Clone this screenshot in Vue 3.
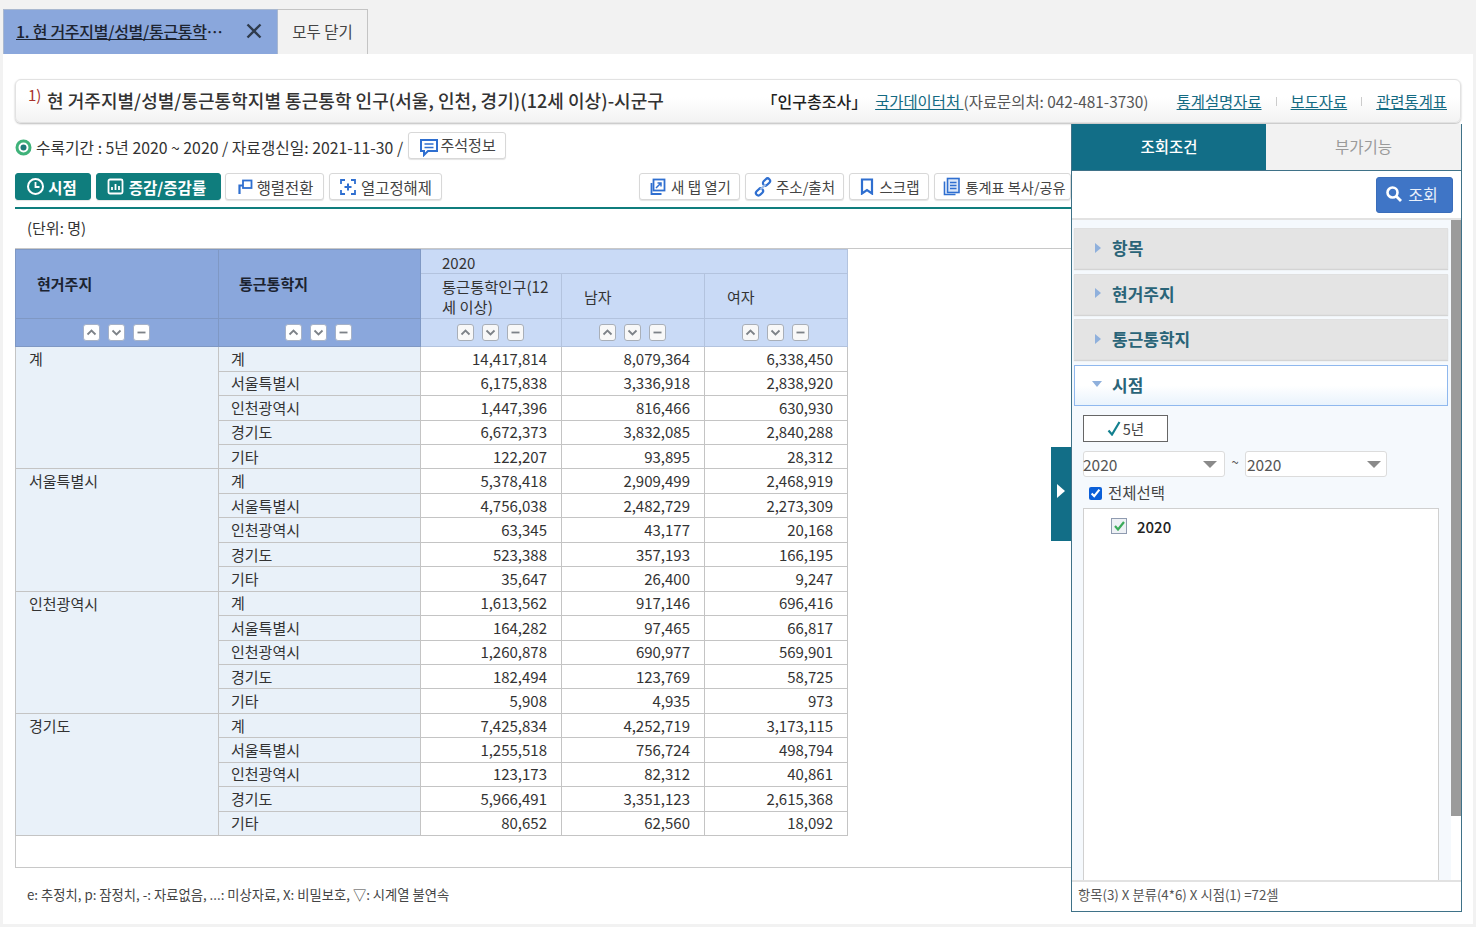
<script setup>
const subs = ['계', '서울특별시', '인천광역시', '경기도', '기타']
const groups = [
  { name: '계', rows: [
    ['14,417,814', '8,079,364', '6,338,450'], ['6,175,838', '3,336,918', '2,838,920'],
    ['1,447,396', '816,466', '630,930'], ['6,672,373', '3,832,085', '2,840,288'], ['122,207', '93,895', '28,312']] },
  { name: '서울특별시', rows: [
    ['5,378,418', '2,909,499', '2,468,919'], ['4,756,038', '2,482,729', '2,273,309'],
    ['63,345', '43,177', '20,168'], ['523,388', '357,193', '166,195'], ['35,647', '26,400', '9,247']] },
  { name: '인천광역시', rows: [
    ['1,613,562', '917,146', '696,416'], ['164,282', '97,465', '66,817'],
    ['1,260,878', '690,977', '569,901'], ['182,494', '123,769', '58,725'], ['5,908', '4,935', '973']] },
  { name: '경기도', rows: [
    ['7,425,834', '4,252,719', '3,173,115'], ['1,255,518', '756,724', '498,794'],
    ['123,173', '82,312', '40,861'], ['5,966,491', '3,351,123', '2,615,368'], ['80,652', '62,560', '18,092']] }
]
const sorters = [0, 1, 2, 3, 4]
const accordion = ['항목', '현거주지', '통근통학지']
</script>

<template>
  <div class="page">
    <nav class="tabs">
      <div class="tab-active">
        <span class="tab-title">1. 현 거주지별/성별/통근통학</span><span class="tab-ell">⋯</span>
        <svg class="tab-x" width="16" height="16" viewBox="0 0 16 16"><path d="M1.500 1.500 14.500 14.500M14.500 1.500 1.500 14.500" stroke="#2f3b4c" stroke-width="2.400" fill="none"/></svg>
      </div>
      <div class="tab-close">모두 닫기</div>
    </nav>

    <main class="main">
      <header class="title-box">
        <h1 class="title"><sup>1)</sup><span class="title-text">현 거주지별/성별/통근통학지별 통근통학 인구(서울, 인천, 경기)(12세 이상)-시군구</span></h1>
        <div class="title-links">
          <b>「인구총조사」</b>
          <span class="org"><a>국가데이터처 </a>(자료문의처: 042-481-3730)</span>
          <a class="l1">통계설명자료</a><i class="tick"></i><a>보도자료</a><i class="tick"></i><a>관련통계표</a>
        </div>
      </header>

      <div class="info">
        <svg width="17" height="17" viewBox="0 0 17 17"><circle cx="8.500" cy="8.500" r="6.500" fill="#fff" stroke="#3fb27a" stroke-width="3"/><circle cx="8.500" cy="8.500" r="3" fill="#1f7a78"/></svg>
        <span class="info-text">수록기간 : 5년 2020 ~ 2020 / 자료갱신일: 2021-11-30 /</span>
        <button class="btn note">
          <svg width="20" height="20" viewBox="0 0 20 20"><path d="M2 3h16v11H9l-4 4v-4H2z" fill="none" stroke="#2f6fd0" stroke-width="2"/><path d="M5.500 7h9M5.500 10.500h9" stroke="#2f6fd0" stroke-width="1.600"/></svg>주석정보
        </button>
      </div>

      <div class="toolbar">
        <button class="btn teal t1">
          <svg width="19" height="19" viewBox="0 0 19 19"><circle cx="9.500" cy="9.500" r="7.500" fill="none" stroke="#fff" stroke-width="2"/><path d="M9.500 5v5h4" fill="none" stroke="#fff" stroke-width="1.800"/></svg>시점
        </button>
        <button class="btn teal t2">
          <svg width="17" height="17" viewBox="0 0 17 17"><rect x="1.500" y="1.500" width="14" height="14" rx="1.500" fill="none" stroke="#fff" stroke-width="1.800"/><path d="M5 12V9M8.500 12V6M12 12V8" stroke="#fff" stroke-width="1.800"/></svg>증감/증감률
        </button>
        <button class="btn t3">
          <svg width="18" height="18" viewBox="0 0 18 18"><rect x="7" y="2.500" width="8.500" height="7.500" fill="none" stroke="#2f6fd0" stroke-width="1.800"/><path d="M3.500 16V7.500H7" fill="none" stroke="#2f6fd0" stroke-width="2.200"/></svg>행렬전환
        </button>
        <button class="btn t4">
          <svg width="18" height="18" viewBox="0 0 18 18"><path d="M6 2H2v4M12 2h4v4M6 16H2v-4M12 16h4v-4" fill="none" stroke="#2f6fd0" stroke-width="1.800"/><path d="M9 5.500v7M5.500 9h7" stroke="#2f6fd0" stroke-width="2"/></svg>열고정해제
        </button>
        <span class="spacer"></span>
        <button class="btn t5">
          <svg width="18" height="18" viewBox="0 0 18 18"><rect x="5.500" y="1.500" width="11" height="11" fill="none" stroke="#2f6fd0" stroke-width="1.800"/><path d="M3.500 5v11h10" fill="none" stroke="#2f6fd0" stroke-width="1.800"/><path d="M8 10l5-5M9.500 5H13v3.500" fill="none" stroke="#2f6fd0" stroke-width="1.500"/></svg>새 탭 열기
        </button>
        <button class="btn t6">
          <svg width="20" height="20" viewBox="0 0 20 20"><g fill="none" stroke="#2f6fd0" stroke-width="2.200"><rect x="9.500" y="2.500" width="8" height="5" rx="2.500" transform="rotate(-45 13.500 5)"/><rect x="2.500" y="12.500" width="8" height="5" rx="2.500" transform="rotate(-45 6.500 15)"/></g><path d="M7.500 12.500l5-5" stroke="#9cbbe8" stroke-width="2"/></svg>주소/출처
        </button>
        <button class="btn t7">
          <svg width="14" height="17" viewBox="0 0 14 17"><path d="M2 1.500h10v14l-5-3.500-5 3.500z" fill="none" stroke="#2f6fd0" stroke-width="2.200"/></svg>스크랩
        </button>
        <button class="btn t8">
          <svg width="19" height="19" viewBox="0 0 19 19"><rect x="5.500" y="1.500" width="11.500" height="14" fill="#dbe7f8" stroke="#2f6fd0" stroke-width="1.600"/><path d="M8 5.500h6.500M8 8.500h6.500M8 11.500h6.500" stroke="#2f6fd0" stroke-width="1.300"/><path d="M2.500 4.500v13h11" fill="none" stroke="#2f6fd0" stroke-width="1.600"/></svg>통계표 복사/공유
        </button>
      </div>

      <p class="unit">(단위: 명)</p>

      <section class="table-box">
        <table class="grid">
          <colgroup><col class="c0"><col class="c1"><col class="c2"><col class="c3"><col class="c3"></colgroup>
          <thead>
            <tr class="h1">
              <th class="dark first" rowspan="2">현거주지</th>
              <th class="dark" rowspan="2">통근통학지</th>
              <th class="light yr" colspan="3">2020</th>
            </tr>
            <tr class="h2">
              <th class="light wrap">통근통학인구(12<br>세 이상)</th>
              <th class="light lab">남자</th>
              <th class="light lab">여자</th>
            </tr>
            <tr class="h3">
              <td v-for="n in sorters" :key="n" :class="n < 2 ? 'dark' : 'light'">
                <div class="sorts">
                  <span class="sort"><svg width="11" height="7" viewBox="0 0 11 7"><path d="M1.500 5.500 5.500 1.500 9.500 5.500" fill="none" stroke="#7d8288" stroke-width="1.800"/></svg></span>
                  <span class="sort"><svg width="11" height="7" viewBox="0 0 11 7"><path d="M1.500 1.500 5.500 5.500 9.500 1.500" fill="none" stroke="#7d8288" stroke-width="1.800"/></svg></span>
                  <span class="sort"><svg width="11" height="7" viewBox="0 0 11 7"><path d="M1.500 3.500h8" fill="none" stroke="#7d8288" stroke-width="1.800"/></svg></span>
                </div>
              </td>
            </tr>
          </thead>
          <tbody>
            <template v-for="g in groups" :key="g.name">
              <tr v-for="(r, i) in g.rows" :key="i">
                <th v-if="i === 0" class="rh group" rowspan="5">{{ g.name }}</th>
                <th class="rh">{{ subs[i] }}</th>
                <td v-for="(v, j) in r" :key="j" class="num">{{ v }}</td>
              </tr>
            </template>
          </tbody>
        </table>
      </section>

      <p class="legend">e: 추정치, p: 잠정치, -: 자료없음, ...: 미상자료, X: 비밀보호, ▽: 시계열 불연속</p>

      <aside class="panel">
        <button class="handle" aria-label="패널 접기"><svg width="10" height="14" viewBox="0 0 10 14"><path d="M1 0l8 7-8 7z" fill="#fff"/></svg></button>
        <div class="p-tabs">
          <div class="p-tab on">조회조건</div>
          <div class="p-tab">부가기능</div>
        </div>
        <div class="p-search">
          <button class="search">
            <svg width="18" height="18" viewBox="0 0 18 18"><circle cx="7.500" cy="7.500" r="5" fill="none" stroke="#fff" stroke-width="2.600"/><path d="M11 11l5 5" stroke="#fff" stroke-width="2.800"/></svg>조회
          </button>
        </div>
        <div class="p-body">
          <div class="p-scroll">
            <div class="p-content">
              <div v-for="a in accordion" :key="a" class="acc">
                <svg width="6" height="10" viewBox="0 0 6 10"><path d="M0 0l6 5-6 5z" fill="#8fb0dc"/></svg><span>{{ a }}</span>
              </div>
              <div class="acc open">
                <svg class="down" width="10" height="6" viewBox="0 0 10 6"><path d="M0 0h10L5 6z" fill="#8fb0dc"/></svg><span>시점</span>
              </div>
              <div class="open-body">
                <button class="period">
                  <svg width="14" height="15" viewBox="0 0 14 15"><path d="M1.500 9.500 5 13.500 12.500 1" fill="none" stroke="#13808f" stroke-width="2.200"/></svg>5년
                </button>
                <div class="range">
                  <div class="sel">2020<i class="caret"></i></div>
                  <span class="tilde">~</span>
                  <div class="sel second">2020<i class="caret"></i></div>
                </div>
                <label class="all"><input type="checkbox" checked>전체선택</label>
                <div class="list">
                  <div class="item">
                    <span class="cb"><svg width="11" height="10" viewBox="0 0 11 10"><path d="M1 5l3 3.500L10 1" fill="none" stroke="#3cab5a" stroke-width="2.200"/></svg></span>
                    2020
                  </div>
                </div>
              </div>
            </div>
            <div class="bar"><div class="thumb"></div></div>
          </div>
        </div>
        <div class="p-foot">항목(3) X 분류(4*6) X 시점(1) =72셀</div>
      </aside>
    </main>
  </div>
</template>

<style>
html, body { background: #f2f2f2; }
</style>

<style scoped>
* { box-sizing: border-box; }
.page {
  width: 1476px;
  height: 927px;
  overflow: hidden;
  font-family: "Noto Sans CJK KR", "Noto Sans", sans-serif;
  font-size: 15px;
  color: #333;
  background: #f2f2f2;
}
button { font-family: inherit; padding: 0; cursor: pointer; }
a { text-decoration: underline; }

.tabs { display: flex; height: 54px; padding: 9px 0 0 3px; }
.tab-active {
  width: 275px;
  background: #8aa7dc;
  border: 1px solid #a9b8d0;
  border-bottom: 0;
  display: flex;
  align-items: center;
  padding: 0 0 2px 12px;
  color: #1d2431;
  font-weight: 500;
  font-size: 16px;
}
.tab-title { text-decoration: underline; letter-spacing: -0.28px; }
.tab-ell { letter-spacing: -1px; }
.tab-x { margin-left: 24px; }
.tab-close {
  width: 90px;
  border: 1px solid #c4c4c4;
  border-bottom: 0;
  border-left: 0;
  display: flex;
  align-items: center;
  justify-content: center;
  padding-bottom: 2px;
  font-size: 15.500px;
  color: #444;
}

.main {
  position: relative;
  margin-left: 3px;
  width: 1470px;
  height: 870px;
  background: #fff;
  padding: 25px 0 0 12px;
}
.title-box {
  width: 1446px;
  height: 44px;
  border: 1px solid #e2e2e2;
  border-radius: 6px;
  background: linear-gradient(#fff 40%, #f3f3f3);
  box-shadow: 0 1px 2px #bbb;
  display: flex;
  align-items: center;
  justify-content: space-between;
  padding: 0 13px 0 12px;
}
.title { display: flex; align-items: center; margin: -3px 0 0; font-size: 18px; font-weight: 500; color: #333; white-space: nowrap; letter-spacing: 0.04px; }
.title sup { color: #a8322c; font-size: 15px; font-weight: 400; line-height: 1; margin: -11px 6px 0 0; width: 13px; }
.title-links { display: flex; align-items: center; font-size: 15.400px; color: #555; white-space: nowrap; }
.title-links b { font-weight: 500; color: #222; font-size: 16px; }
.title-links a { color: #146a82; }
.org { margin: 0 28px 0 8px; }
.tick { width: 1px; height: 9px; background: #ccc; margin: 0 14px; }

.info { display: flex; align-items: center; height: 28px; margin-top: 8px; }
.info svg:first-child { margin-top: 5px; }
.info-text { margin: 5px 0 0 4px; font-size: 15.800px; color: #333; white-space: nowrap; }
.btn {
  display: inline-flex;
  align-items: center;
  justify-content: center;
  height: 27px;
  border: 1px solid #d8d8d8;
  border-radius: 3px;
  background: #fff;
  color: #444;
  font-size: 15.400px;
  white-space: nowrap;
  box-shadow: 0 1px 1px #e4e4e4;
}
.note { width: 98px; margin-left: 5px; padding-bottom: 2px; font-size: 15px; gap: 2px; }
.note svg { margin-top: 2px; }
.toolbar { display: flex; height: 27px; margin-top: 14px; width: 1056px; gap: 5px; }
.spacer { flex: 1; }
.teal { background: #0f7d7d; border-color: #0f7d7d; color: #fff; font-weight: 700; gap: 3px; font-size: 15.500px; }
.t1 { width: 76px; padding-right: 3px; }
.t2 { width: 125px; gap: 5px; padding-right: 4px; }
.t3 { width: 99px; margin-left: -1px; gap: 3px; }
.t4 { width: 113px; gap: 4px; }
.t5 { width: 101px; gap: 5px; font-size: 14.500px; }
.t6 { width: 99px; gap: 3px; font-size: 14.500px; padding-right: 1px; }
.t7 { width: 80px; gap: 5px; font-size: 14.500px; padding-left: 2px; }
.t8 { width: 137px; gap: 4px; flex: none; font-size: 14.200px; padding-left: 3px; }

.unit {
  margin: 7px 0 0;
  padding: 0 0 0 12px;
  height: 41px;
  border-top: 2px solid #0f7d7d;
  width: 1056px;
  line-height: 38px;
  font-size: 15px;
  color: #333;
}
.table-box { width: 1446px; height: 620px; border: 1px solid #c8c8c8; }
.grid { border-collapse: collapse; table-layout: fixed; width: 832px; margin-left: -1px; font-size: 15px; }
.c0 { width: 203px; }
.c1 { width: 202px; }
.c2 { width: 141px; }
.c3 { width: 143px; }
.grid th, .grid td { padding: 0; border: 1px solid #c4c4c4; font-weight: 400; }
.h1 { height: 24px; }
.h2 { height: 45px; }
.h3 { height: 28.300px; }
.dark { background: #8aa7dc; border-color: #7f98c4 !important; }
.grid th.dark { font-weight: 700; text-align: left; padding-left: 20px; color: #1b2330; padding-bottom: 2px; }
.grid th.dark.first { padding-left: 21px; }
.light { background: #c9daf6; border-color: #b3c3de !important; color: #333; }
.grid th.light { text-align: left; }
.yr { padding: 3px 0 0 21px !important; line-height: 20px; }
.wrap { padding-left: 21px !important; font-size: 15.300px; line-height: 20px; }
.lab { padding-left: 22px !important; }
.sorts { display: flex; justify-content: center; gap: 8px; padding-right: 2px; }
.sort {
  width: 17px;
  height: 17px;
  background: #f8f8f8;
  border: 1.500px solid #a9afb8;
  border-radius: 3px;
  display: flex;
  align-items: center;
  justify-content: center;
}
.dark .sort { border-color: #a6b2c8; background: #fff; }
tbody tr { height: 24.450px; }
.rh { background: #e9f1f9; text-align: left; padding-left: 12px !important; color: #333; line-height: 20px; }
.rh.group { vertical-align: top; padding-top: 2px !important; padding-left: 13px !important; }
.num { text-align: right; padding-right: 14px !important; color: #333; background: #fff; line-height: 20px; }
.legend { margin: 17px 0 0 12px; font-size: 13.300px; color: #444; }

.panel {
  position: absolute;
  left: 1068px;
  top: 70px;
  width: 391px;
  height: 788px;
  background: #fff;
  border: 1.500px solid #3f7288;
  border-top: 0;
  display: flex;
  flex-direction: column;
}
.handle {
  position: absolute;
  left: -21px;
  top: 323px;
  width: 20px;
  height: 94px;
  background: #126e87;
  border: 0;
  padding-bottom: 7px;
  display: flex;
  align-items: center;
  justify-content: center;
}
.p-tabs { display: flex; height: 47px; border-bottom: 1.500px solid #3f7288; flex: none; }
.p-tab { flex: 1; display: flex; align-items: center; justify-content: center; padding-bottom: 3px; font-size: 15.500px; background: #f2f2f2; color: #9a9a9a; }
.p-tab.on { flex: none; width: 194px; background: #126e87; color: #fff; font-weight: 500; }
.p-search { height: 49px; flex: none; display: flex; justify-content: flex-end; align-items: center; padding-right: 8px; border-bottom: 2px solid #e2e2e2; }
.search {
  width: 77px;
  height: 36px;
  background: #3f75c6;
  border: 1px solid #3a6dba;
  border-radius: 3px;
  color: #eaf0fa;
  font-size: 16px;
  display: flex;
  align-items: center;
  justify-content: center;
  gap: 5px;
  padding: 0 6px 2px 0;
}
.p-body { flex: 1; min-height: 0; }
.p-scroll { display: flex; height: 100%; }
.p-content { width: 379px; height: 100%; background: #f5f9fd; padding: 8px 0 0 2px; display: flex; flex-direction: column; }
.bar { width: 10px; flex: none; background: #fff; }
.thumb { height: 596px; background: #9b9b9b; }
.acc {
  width: 374px;
  height: 41px;
  flex: none;
  margin-bottom: 4.500px;
  background: #e4e4e4;
  border: 1px solid #e0e0e0;
  box-shadow: 0 1px 1px #d4d4d4;
  display: flex;
  align-items: center;
  padding: 0 0 2px 20px;
  font-size: 17px;
  font-weight: 700;
  color: #2a6478;
}
.acc span { margin-left: 11px; }
.acc.open {
  background: linear-gradient(#fff 50%, #e9f3fc);
  border: 1px solid #8fb8ee;
  margin-bottom: 0;
  box-shadow: none;
  padding-left: 17px;
}
.acc.open span { margin-left: 10px; color: #2a6478; }
.open-body { flex: 1; padding: 9px 0 0 9px; display: flex; flex-direction: column; min-height: 0; }
.period {
  width: 85px;
  height: 27px;
  background: #fff;
  border: 1px solid #666;
  display: flex;
  align-items: center;
  justify-content: center;
  gap: 2px;
  font-size: 14.500px;
  color: #444;
  flex: none;
}
.range { display: flex; align-items: center; margin-top: 9px; height: 27px; flex: none; }
.sel {
  position: relative;
  width: 142px;
  height: 26px;
  background: #fff;
  border: 1px solid #dcdcdc;
  border-radius: 3px;
  font-size: 15.500px;
  line-height: 25px;
  color: #555;
  text-indent: -1px;
}
.sel.second { text-indent: 1px; }
.sel.second .caret { right: 5px; }
.caret { position: absolute; right: 7px; top: 9px; border: 7px solid transparent; border-top: 7px solid #8a8a8a; border-bottom: 0; width: 0; height: 0; }
.tilde { width: 20px; text-align: center; font-size: 13px; margin-top: -6px; color: #555; }
.all { display: flex; align-items: center; margin: 1px 0 0 6px; height: 27px; font-size: 15.500px; color: #444; flex: none; }
.all input { width: 13px; height: 13px; margin: 3px 6px 0 0; accent-color: #0b5fd8; }
.list { flex: 1; width: 356px; background: #fff; border: 1px solid #d0d0d0; border-bottom: 0; margin-top: 2px; padding: 10px 0 0 27px; min-height: 0; }
.item { display: flex; align-items: center; gap: 10px; font-size: 15px; font-weight: 500; color: #222; height: 17px; margin-top: -1px; }
.cb { width: 16px; height: 16px; background: #eef1f5; border: 1.500px solid #8f9bb0; display: flex; align-items: center; justify-content: center; }
.p-foot { height: 31px; flex: none; border-top: 2px solid #e2e2e2; padding-left: 6px; font-size: 13.300px; line-height: 25px; color: #555; background: #fff; }
</style>
